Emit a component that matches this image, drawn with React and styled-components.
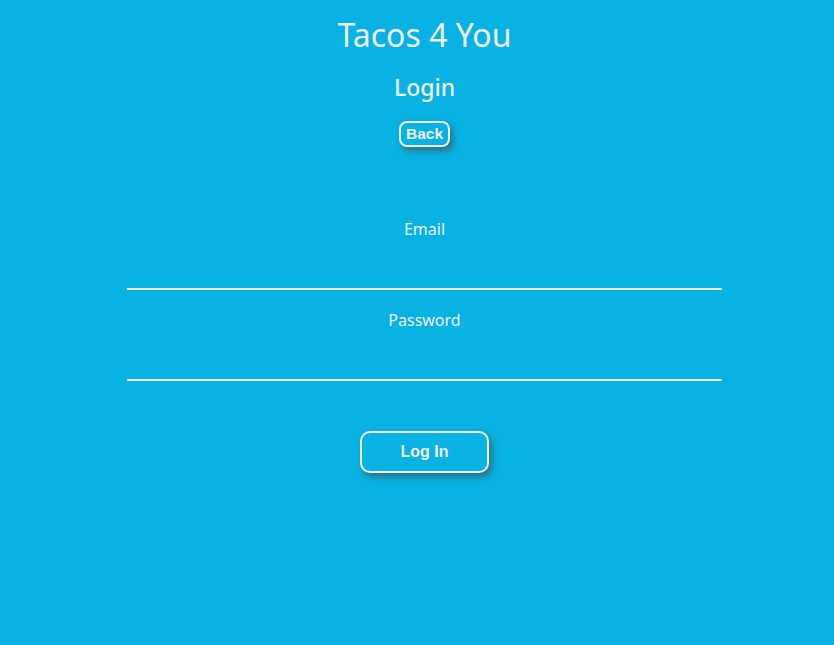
import React from "react";
import styled, { createGlobalStyle } from "styled-components";

const Global = createGlobalStyle`
  html, body { margin: 0; padding: 0; background: #08b2e3; }
  body { font-family: "Noto Sans", "Open Sans", sans-serif; color: #eeeeee; }
  * { box-sizing: border-box; }
`;

const Page = styled.div`
  min-height: 645px;
  padding-left: 15px;
  display: flex;
  flex-direction: column;
  align-items: center;
`;

const Title = styled.h1`
  margin: 15px 0 0;
  font-size: 32px;
  line-height: 40px;
  font-weight: 400;
`;

const Subtitle = styled.h2`
  margin: 17px 0 0;
  font-size: 23px;
  line-height: 30px;
  font-weight: 500;
`;

const Button = styled.button`
  font-family: "Liberation Sans", Arial, sans-serif;
  font-weight: 700;
  color: #eeeeee;
  background: transparent;
  border: 2px solid #eeeeee;
  box-shadow: 3px 4px 6px rgba(70, 70, 70, 0.6);
  cursor: pointer;
  margin-top: ${p => p.$top}px;
  width: ${p => p.$w}px;
  height: ${p => p.$h}px;
  border-radius: ${p => p.$r}px;
  font-size: ${p => p.$fs}px;
  padding: 0;
`;

const Form = styled.form`
  margin-top: 71px;
  width: 595px;
  display: flex;
  flex-direction: column;
  align-items: center;
`;

const Label = styled.label`
  font-size: 16px;
  line-height: 22px;
  margin-top: ${p => p.$top}px;
`;

const Input = styled.input`
  width: 100%;
  height: 50px;
  background: transparent;
  border: none;
  border-bottom: 2px solid #eeeeee;
  outline: none;
  color: #eeeeee;
  font-size: 16px;
`;

export default function App() {
  return (
    <>
      <Global />
      <Page>
        <Title>Tacos 4 You</Title>
        <Subtitle>Login</Subtitle>
        <Button type="button" $top={19} $w={51} $h={26} $r={8} $fs={15.5}>Back</Button>
        <Form onSubmit={e => e.preventDefault()}>
          <Label $top={0}>Email</Label>
          <Input type="email" />
          <Label $top={19}>Password</Label>
          <Input type="password" />
          <Button type="submit" $top={50} $w={129} $h={42} $r={10} $fs={16}>Log In</Button>
        </Form>
      </Page>
    </>
  );
}
